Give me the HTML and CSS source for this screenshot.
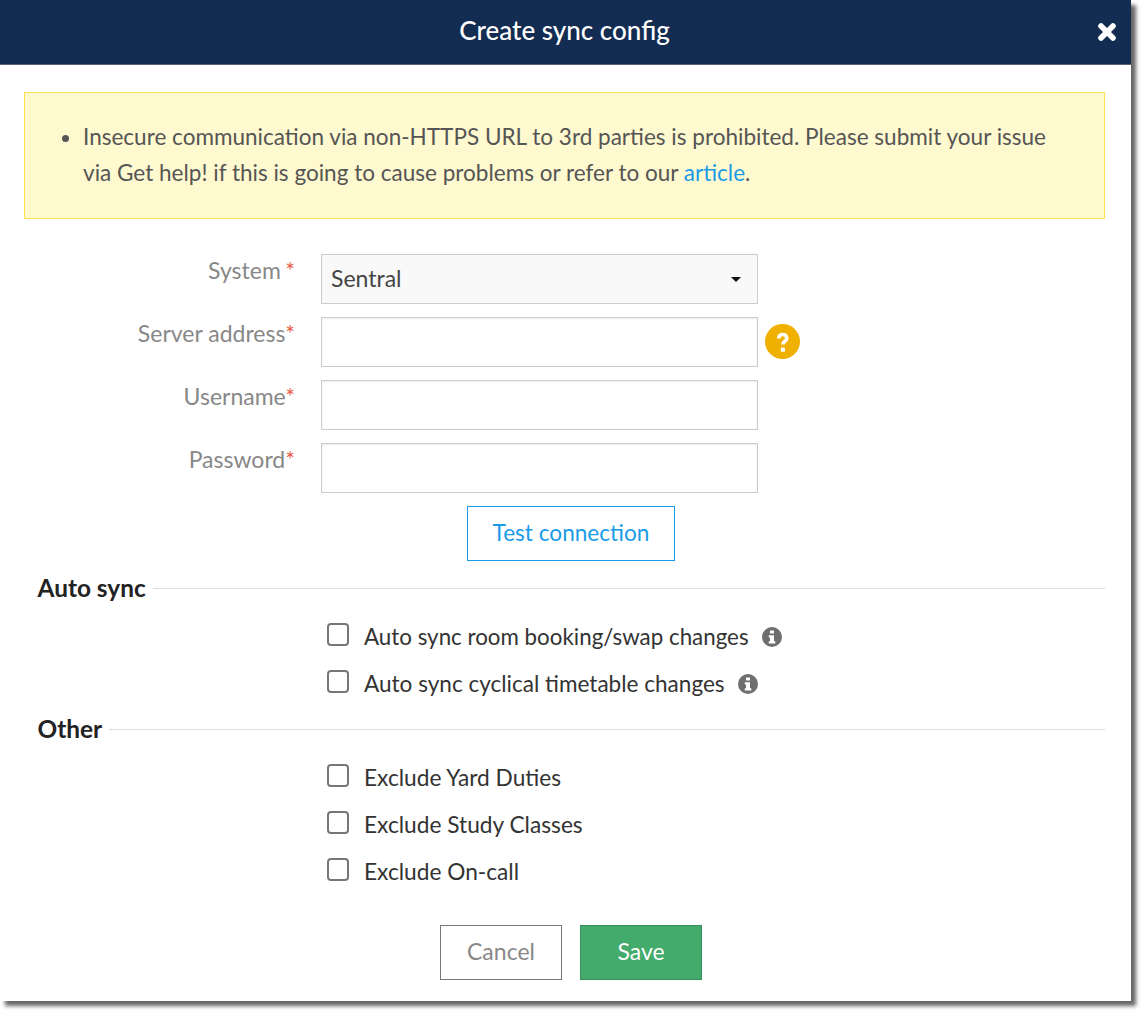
FILE: index.html
```html
<!DOCTYPE html>
<html lang="en">
<head>
<meta charset="utf-8">
<title>Create sync config</title>
<link rel="stylesheet" href="styles.css">
</head>
<body>
<div class="dialog">
  <header class="head">
    <h1 class="title">Create sync config</h1>
    <svg class="close" viewBox="0 0 20 20" aria-label="Close"><path d="M4 4 L16 16 M16 4 L4 16" stroke="#fff" stroke-width="5.6" stroke-linecap="round"/></svg>
  </header>
  <div class="body">
    <div class="notice">
      <ul class="notice-list">
        <li>Insecure communication via non-HTTPS URL to 3rd parties is prohibited. Please submit your issue via Get help! if this is going to cause problems or refer to our <a class="link" href="#">article</a>.</li>
      </ul>
    </div>
    <div class="form">
      <div class="row">
        <label class="label label-system">System <span class="req">*</span></label>
        <div class="select"><span>Sentral</span><span class="caret"></span></div>
      </div>
      <div class="row">
        <label class="label">Server address<span class="req">*</span></label>
        <div class="input"></div>
        <svg class="help" viewBox="0 0 35 35" aria-label="Help"><circle cx="17.5" cy="17.5" r="17.5" fill="#f0b000"/><path d="M13.6 14.6c0-3 2-4.1 4.1-4.1s4.1 1.4 4.1 3.7c0 3-3.9 3-3.9 6.3" fill="none" stroke="#fff" stroke-width="3.6"/><rect x="15.9" y="23.6" width="4" height="4.2" rx=".5" fill="#fff"/></svg>
      </div>
      <div class="row">
        <label class="label">Username<span class="req">*</span></label>
        <div class="input"></div>
      </div>
      <div class="row">
        <label class="label">Password<span class="req">*</span></label>
        <div class="input"></div>
      </div>
    </div>
    <div class="test-wrap"><button class="btn-test">Test connection</button></div>
    <div class="section section-auto"><span class="section-name">Auto sync</span><span class="rule"></span></div>
    <div class="checks">
      <div class="check check-room"><span class="box"></span><span>Auto sync room booking/swap changes</span>
        <svg class="info" viewBox="0 0 20 20"><circle cx="10" cy="10" r="10" fill="#6f6f6f"/><rect x="8" y="3.4" width="4" height="3.2" rx=".6" fill="#fff"/><path d="M6.8 8.2h5.2v6h1.3v2.4H6.8v-2.4H8v-3.6H6.8z" fill="#fff"/></svg>
      </div>
      <div class="check check-cyclical"><span class="box"></span><span>Auto sync cyclical timetable changes</span>
        <svg class="info" viewBox="0 0 20 20"><circle cx="10" cy="10" r="10" fill="#6f6f6f"/><rect x="8" y="3.4" width="4" height="3.2" rx=".6" fill="#fff"/><path d="M6.8 8.2h5.2v6h1.3v2.4H6.8v-2.4H8v-3.6H6.8z" fill="#fff"/></svg>
      </div>
    </div>
    <div class="section section-other"><span class="section-name">Other</span><span class="rule"></span></div>
    <div class="checks">
      <div class="check"><span class="box"></span><span>Exclude Yard Duties</span></div>
      <div class="check"><span class="box"></span><span>Exclude Study Classes</span></div>
      <div class="check"><span class="box"></span><span>Exclude On-call</span></div>
    </div>
    <div class="actions">
      <button class="btn btn-cancel">Cancel</button>
      <button class="btn btn-save">Save</button>
    </div>
  </div>
</div>
</body>
</html>
```
FILE: styles.css
```css
* { box-sizing: border-box; }
html, body { margin: 0; background: #fff; }
body { width: 1146px; height: 1016px; overflow: hidden; font-family: "Lato", "Liberation Sans", sans-serif; }
.dialog { width: 1131px; height: 1001px; background: #fff; box-shadow: 5px 5px 4px rgba(0,0,0,.6); }
.head { height: 65px; background: #132c52; border-bottom: 1px solid #5a6470; display: flex; align-items: center; justify-content: center; position: relative; padding: 0 2px 4px 0; }
.title { margin: 0; font-size: 26px; font-weight: 500; color: #fff; }
.close { position: absolute; left: 1097px; top: 22px; width: 20px; height: 20px; }
.body { padding: 27px 26px 0 24px; }
.notice { height: 127px; background: #fff9d0; border: 1px solid #ffe24f; padding: 26px 40px 0 0; }
.notice-list { margin: 0; padding: 0 0 0 58px; font-size: 22.54px; line-height: 36px; color: #555; }
.link { color: #1a9be8; text-decoration: none; }
.form { margin-top: 35px; display: flex; flex-direction: column; gap: 13px; }
.row { display: flex; height: 50px; }
.label { width: 271px; text-align: right; font-size: 23px; line-height: 33px; color: #888; }
.label-system { word-spacing: -1.5px; }
.req { color: #e8604c; }
.select { margin-left: 26px; width: 437px; height: 50px; border: 1px solid #ccc; background: #f9f9f9; display: flex; align-items: center; justify-content: space-between; padding: 0 16px 2px 9px; font-size: 23px; color: #444; }
.caret { width: 0; height: 0; border-left: 5px solid transparent; border-right: 5px solid transparent; border-top: 5px solid #111; margin-top: 2px; }
.input { margin-left: 26px; width: 437px; height: 50px; border: 1px solid #ccc; background: #fff; box-shadow: inset 0 1px 2px rgba(0,0,0,.08); }
.help { margin: 7px 0 0 7px; width: 35px; height: 35px; }
.test-wrap { margin-top: 13px; padding-left: 443px; }
.btn-test { width: 208px; height: 55px; background: #fff; border: 1px solid #1a9be8; color: #1a9be8; font: 22.6px "Lato", sans-serif; padding: 0 0 2px; }
.section { display: flex; align-items: center; font-size: 24.4px; font-weight: 700; color: #222; height: 30px; }
.section-auto { margin-top: 13px; }
.section-other { margin-top: 8px; }
.section-name { padding: 0 7px 4px 13.5px; }
.rule { flex: 1; height: 1px; background: #ddd; margin-top: -1px; }
.checks { display: flex; flex-direction: column; padding-left: 303px; }
.section-auto + .checks { margin-top: 9px; }
.section-other + .checks { margin-top: 9px; }
.check { display: flex; align-items: center; height: 47px; font-size: 22.7px; color: #333; }
.check-room { font-size: 22.35px; }
.check-cyclical { font-size: 22.55px; }
.box { width: 22px; height: 23px; border: 2px solid #777; border-radius: 4px; margin: 0 15px 5px 0; background: #fff; }
.info { margin-left: 13px; width: 20px; height: 20px; }
.actions { margin-top: 30px; display: flex; justify-content: center; gap: 18px; padding-left: 13px; }
.btn { width: 122px; height: 55px; font: 23px "Lato", sans-serif; padding: 0 0 3px; }
.btn-cancel { background: #fff; border: 1px solid #777; color: #888; }
.btn-save { background: #43ab6b; border: 1px solid #38915a; color: #fff; }
```
